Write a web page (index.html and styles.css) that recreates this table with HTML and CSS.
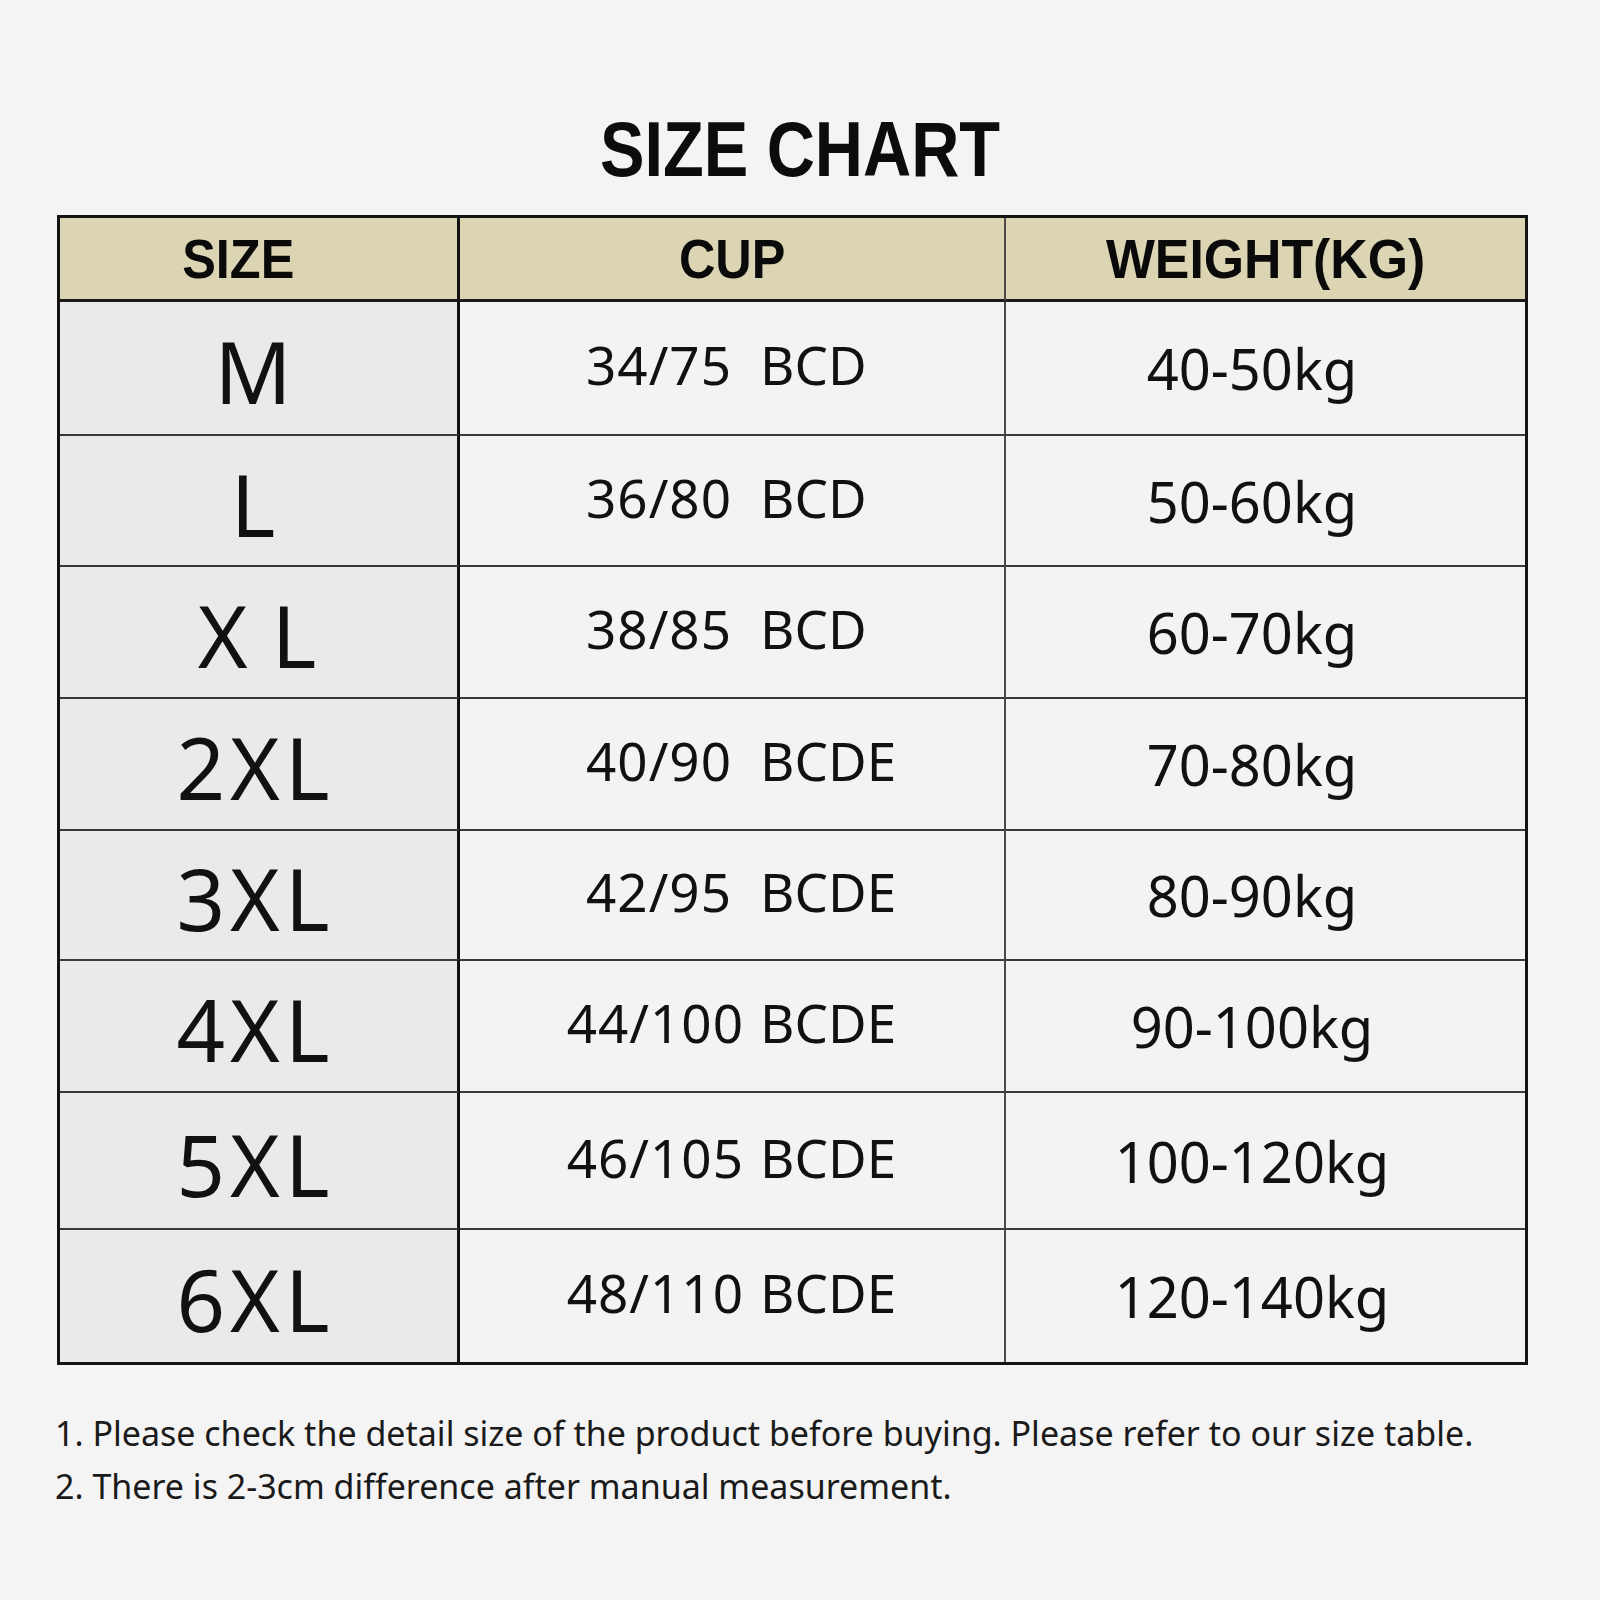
FILE: index.html
```html
<!DOCTYPE html>
<html>
<head>
<meta charset="utf-8">
<link rel="stylesheet" href="styles.css">
</head>
<body>
<div class="page">
  <h1 class="title"><span class="narrow">SIZE CHART</span></h1>
  <div class="chart">
    <div class="cell head h-size"><span class="narrow">SIZE</span></div>
    <div class="cell head h-cup"><span class="narrow">CUP</span></div>
    <div class="cell head h-weight"><span class="narrow">WEIGHT(KG)</span></div>

    <div class="cell size first">M</div>
    <div class="cell cup first"><div class="cup-inner"><span class="num">34/75</span><span class="let">BCD</span></div></div>
    <div class="cell weight first">40-50kg</div>

    <div class="cell size">L</div>
    <div class="cell cup"><div class="cup-inner"><span class="num">36/80</span><span class="let">BCD</span></div></div>
    <div class="cell weight">50-60kg</div>

    <div class="cell size spaced">X&nbsp;L</div>
    <div class="cell cup"><div class="cup-inner"><span class="num">38/85</span><span class="let">BCD</span></div></div>
    <div class="cell weight">60-70kg</div>

    <div class="cell size">2XL</div>
    <div class="cell cup"><div class="cup-inner"><span class="num">40/90</span><span class="let">BCDE</span></div></div>
    <div class="cell weight">70-80kg</div>

    <div class="cell size">3XL</div>
    <div class="cell cup"><div class="cup-inner"><span class="num">42/95</span><span class="let">BCDE</span></div></div>
    <div class="cell weight">80-90kg</div>

    <div class="cell size">4XL</div>
    <div class="cell cup"><div class="cup-inner wide"><span class="num">44/100</span><span class="let">BCDE</span></div></div>
    <div class="cell weight">90-100kg</div>

    <div class="cell size">5XL</div>
    <div class="cell cup"><div class="cup-inner wide"><span class="num">46/105</span><span class="let">BCDE</span></div></div>
    <div class="cell weight">100-120kg</div>

    <div class="cell size">6XL</div>
    <div class="cell cup"><div class="cup-inner wide"><span class="num">48/110</span><span class="let">BCDE</span></div></div>
    <div class="cell weight">120-140kg</div>
  </div>
  <div class="notes">
    <p>1. Please check the detail size of the product before buying. Please refer to our size table.</p>
    <p>2. There is 2-3cm difference after manual measurement.</p>
  </div>
</div>
</body>
</html>
```

FILE: styles.css
```css
html, body {
  margin: 0;
  padding: 0;
  background: #f4f4f4;
}

.page {
  width: 1600px;
  height: 1600px;
  padding-top: 110px;
  box-sizing: border-box;
  display: flex;
  flex-direction: column;
  align-items: flex-start;
}

.narrow {
  display: inline-block;
  transform: scaleX(0.9);
  transform-origin: center;
}

.title {
  align-self: center;
  margin: 0 0 27px 0;
  font-family: "Liberation Sans", Arial, sans-serif;
  font-weight: 700;
  font-size: 78px;
  line-height: 78px;
  color: #0c0c0c;
}

.title .narrow {
  transform: scaleX(0.855);
}

.chart {
  margin-left: 57px;
  width: 1471px;
  box-sizing: border-box;
  border: 3px solid #141414;
  display: grid;
  grid-template-columns: 400px 546px 1fr;
  grid-template-rows: 84px 132px 131px 132px 132px 130px 132px 137px 134px;
}

.cell {
  box-sizing: border-box;
  display: flex;
  align-items: center;
  justify-content: center;
  background: #f3f3f3;
  color: #111;
  font-family: "Noto Sans", "Open Sans", sans-serif;
  line-height: 1.2;
  border-top: 2px solid #3a3a3a;
}

.cell.first {
  border-top: none;
}

.cell.head {
  border-top: none;
  background: #dcd5b4;
  font-family: "Liberation Sans", Arial, sans-serif;
  font-weight: 700;
  font-size: 56px;
  color: #0a0a0a;
  border-bottom: 3px solid #1a1a1a;
}

.h-size { padding-right: 40px; }
.h-weight .narrow { transform: scaleX(0.925); }

.size,
.h-size {
  border-right: 3px solid #111;
}

.cup,
.h-cup {
  border-right: 2px solid #4a4a4a;
}

.cell.size {
  background: #ebe9ea;
  font-size: 85px;
  letter-spacing: 5px;
  padding-top: 6px;
  padding-right: 6px;
}

.cell.size.spaced {
  letter-spacing: 1px;
  padding-right: 2px;
}

.cell.cup {
  font-size: 53px;
  justify-content: flex-start;
  padding-bottom: 6px;
  padding-left: 3px;
}

.cup-inner {
  display: grid;
  grid-template-columns: 269px auto;
  column-gap: 28px;
  align-items: baseline;
}

.cup-inner.wide {
  grid-template-columns: 281px auto;
  column-gap: 16px;
}

.cup-inner .num {
  text-align: right;
  letter-spacing: 1px;
}

.cell.weight {
  font-size: 56px;
  padding-right: 27px;
  padding-top: 2px;
}

.notes {
  margin-top: 42px;
  margin-left: 55px;
  font-family: "Noto Sans", "Open Sans", sans-serif;
  font-size: 34px;
  color: #1a1a1a;
}

.notes p {
  margin: 0;
  line-height: 53px;
}
```
